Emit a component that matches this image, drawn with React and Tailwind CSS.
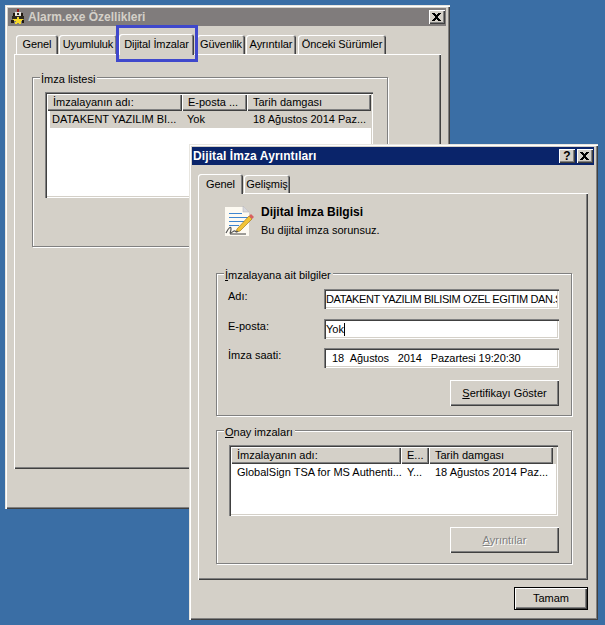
const raised = "shadow-[inset_1px_1px_0_#ffffff,inset_-1px_-1px_0_#404040,inset_-2px_-2px_0_#808080]";
const win = "shadow-[inset_1px_1px_0_#e8e6e0,inset_2px_2px_0_#ffffff,inset_-1px_-1px_0_#404040,inset_-2px_-2px_0_#808080]";
const sunken = "shadow-[inset_1px_1px_0_#808080,inset_2px_2px_0_#404040,inset_-1px_-1px_0_#ffffff,inset_-2px_-2px_0_#d4d0c8]";
const etched = "shadow-[inset_0_0_0_1px_#808080,1px_1px_0_#ffffff,inset_1px_1px_0_1px_#ffffff]";
const tabBevel = "shadow-[inset_1px_1px_0_#ffffff,inset_-1px_0_0_#404040,inset_-2px_0_0_#808080]";

function Tab({ label, w, active, h }) {
  return (
    <div
      className={`flex items-center justify-center rounded-t-[3px] bg-[#d4d0c8] tracking-[-0.1px] ${tabBevel} ${active ? "relative z-10 mb-[-1px]" : ""}`}
      style={{ width: w, height: h }}
    >
      {label}
    </div>
  );
}

function Group({ label, h, children }) {
  return (
    <div className={`relative w-[356px] ${etched}`} style={{ height: h }}>
      <div className="absolute left-[8px] top-[-5px] bg-[#d4d0c8] pl-[1px] pr-[2px] leading-[14px]">{label}</div>
      {children}
    </div>
  );
}

function Header({ cols }) {
  return (
    <div className="flex h-[17px] bg-[#d4d0c8]">
      {cols.map((c) => (
        <div key={c.t} className={`flex items-center pl-[6px] overflow-hidden whitespace-nowrap ${raised}`} style={{ width: c.w }}>{c.t}</div>
      ))}
    </div>
  );
}

function Button({ children, className = "" }) {
  return <div className={`flex items-center justify-center bg-[#d4d0c8] ${raised} ${className}`}>{children}</div>;
}

function Field({ label, value, mt, caret, valueClass = "" }) {
  return (
    <div className="flex" style={{ marginTop: mt }}>
      <div className="w-[96px] ml-[12px] leading-[14px]">{label}</div>
      <div className={`w-[235px] h-[20px] bg-white ${sunken} flex items-center overflow-hidden whitespace-nowrap pl-[2px] pr-[2px]`}>
        <span className={`overflow-hidden ${valueClass}`}>{value}</span>
        {caret && <span className="w-[1px] h-[13px] bg-black" />}
      </div>
    </div>
  );
}

function AlarmIcon() {
  return (
    <svg width="16" height="18" viewBox="0 0 16 18" shapeRendering="crispEdges">
      <rect x="7" y="1" width="2" height="4" fill="#a01818" />
      <rect x="3" y="5" width="3" height="3" fill="#201810" />
      <rect x="10" y="5" width="3" height="3" fill="#201810" />
      <rect x="5" y="4" width="6" height="5" fill="#e8e4dc" />
      <rect x="2" y="8" width="12" height="3" fill="#2c2820" />
      <rect x="7" y="5" width="2" height="2" fill="#302820" />
      <polygon points="8,8 9.5,11 13,11.5 10.5,13.5 11.5,17 8,15 4.5,17 5.5,13.5 3,11.5 6.5,11" fill="#f4d82c" />
      <rect x="1" y="12" width="3" height="3" fill="#201810" />
      <rect x="12" y="12" width="2" height="3" fill="#201810" />
    </svg>
  );
}

function DocIcon() {
  return (
    <svg width="30" height="32" viewBox="0 0 30 32">
      <path d="M1 2h19l5 5v24H1z" fill="#fdfaf2" />
      <path d="M19 1l6 6h-6z" fill="#d8d8dc" stroke="#b8b8c0" strokeWidth="0.6" />
      <g stroke="#3f86d0" strokeWidth="1">
        <path d="M5 8.5h13" />
        <path d="M5 12.5h19" />
        <path d="M5 16.5h17" />
        <path d="M5 20.5h10" />
      </g>
      <path d="M13 24L25 11l3 3-12 12-4 1z" fill="#f2c436" stroke="#a87c18" strokeWidth="0.7" />
      <path d="M25 11l2-2 3 3-2 2z" fill="#d86060" />
      <path d="M2 28c3-6 5-7 5-4s-2 5 0 4 3-3 4-2 2 1 3 0" fill="none" stroke="#555555" strokeWidth="1.2" />
      <path d="M6 29h16" stroke="#404040" strokeWidth="1" />
    </svg>
  );
}

function TitleBtn({ children, className = "" }) {
  return (
    <div className={`w-[16px] h-[14px] bg-[#d4d0c8] flex items-center justify-center font-bold text-[12px] text-black ${raised} ${className}`}>{children}</div>
  );
}

function CloseX() {
  return (
    <svg width="9" height="8" viewBox="0 0 9 8" strokeWidth="2" stroke="#000" shapeRendering="crispEdges" className="mr-[1px]">
      <path d="M1 0l7 8M8 0l-7 8" fill="none" />
    </svg>
  );
}

export default function App() {
  return (
    <div className="relative w-[605px] h-[625px] overflow-hidden bg-[#3a6ea5] text-[11px] text-black font-['Liberation_Sans',Arial,sans-serif]">
      {/* back window */}
      <div className={`absolute left-[5px] top-[5px] w-[445px] h-[504px] bg-[#d4d0c8] pt-[3px] pl-[3px] pr-[4px] ${win}`}>
        <div className="flex h-[18px] items-center bg-[#807c7c] pl-[2px] pr-[1px] text-[12px] font-bold text-[#d4d0c8]">
          <AlarmIcon />
          <span className="ml-[2px] grow">Alarm.exe Özellikleri</span>
          <TitleBtn><CloseX /></TitleBtn>
        </div>
        <div className="flex h-[28px] items-end ml-[8px]">
          <Tab label="Genel" w={42} h={19} />
          <div className="w-[1px]" />
          <Tab label="Uyumluluk" w={58} h={19} />
          <div className="w-[2px]" />
          <Tab label="Dijital İmzalar" w={75} h={21} active />
          <div className="w-[3px]" />
          <Tab label="Güvenlik" w={48} h={19} />
          <div className="w-[1px]" />
          <Tab label="Ayrıntılar" w={50} h={19} />
          <div className="w-[2px]" />
          <Tab label="Önceki Sürümler" w={88} h={19} />
        </div>
        <div className={`ml-[6px] w-[427px] h-[415px] bg-[#d4d0c8] pt-[23px] pl-[18px] ${raised}`}>
          <Group label="İmza listesi" h={170}>
            <div className="pt-[15px] pl-[13px]">
              <div className={`w-[328px] h-[106px] bg-white p-[2px] ${sunken}`}>
                <Header cols={[{ t: "İmzalayanın adı:", w: 135 }, { t: "E-posta ...", w: 65 }, { t: "Tarih damgası", w: 124 }]} />
                <div className="flex h-[17px] ml-[3px] items-center bg-[#d4d0c8] whitespace-nowrap">
                  <div className="w-[135px] pl-[2px]">DATAKENT YAZILIM BI...</div>
                  <div className="w-[65px] pl-[2px]">Yok</div>
                  <div className="pl-[3px]">18 Ağustos 2014 Paz...</div>
                </div>
              </div>
            </div>
          </Group>
        </div>
      </div>

      {/* highlight on the tab */}
      <div className="absolute left-[116px] top-[25px] w-[82px] h-[37px] z-10 border-[3px] border-[#3f48cc]" />

      {/* front window */}
      <div className={`absolute z-20 left-[189px] top-[144px] w-[409px] h-[476px] bg-[#d4d0c8] pt-[3px] pl-[3px] pr-[4px] ${win}`}>
        <div className="flex h-[18px] items-center bg-[#0a246a] pl-[1px] pr-[1px] text-[12px] font-bold text-white">
          <span className="grow tracking-[0.1px]">Dijital İmza Ayrıntıları</span>
          <TitleBtn className="mr-[2px]">?</TitleBtn>
          <TitleBtn><CloseX /></TitleBtn>
        </div>
        <div className="flex h-[28px] items-end ml-[6px]">
          <Tab label="Genel" w={45} h={20} active />
          <div className="w-[1px]" />
          <Tab label="Gelişmiş" w={46} h={18} />
        </div>
        <div className={`ml-[6px] w-[390px] h-[387px] bg-[#d4d0c8] pl-[18px] pt-[12px] ${raised}`}>
          <div className="flex h-[68px] ml-[8px]">
            <DocIcon />
            <div className="ml-[7px]">
              <div className="text-[12px] font-bold leading-[14px]">Dijital İmza Bilgisi</div>
              <div className="mt-[4px] leading-[14px]">Bu dijital imza sorunsuz.</div>
            </div>
          </div>
          <Group label={<><span className="underline">İ</span>mzalayana ait bilgiler</>} h={143}>
            <div className="pt-[16px]">
              <Field label="Adı:" value="DATAKENT YAZILIM BILISIM OZEL EGITIM DAN.SAN" mt={0} valueClass="tracking-[-0.4px]" />
              <Field label="E-posta:" value="Yok" mt={10} caret />
              <Field label="İmza saati:" value={"\u00a0\u00a018\u00a0\u00a0Ağustos\u00a0\u00a0 2014\u00a0\u00a0 Pazartesi 19:20:30"} mt={9} valueClass="tracking-[-0.1px]" />
              <div className="flex justify-end pr-[13px] mt-[12px]">
                <Button className="w-[109px] h-[26px]"><span><span className="underline">S</span>ertifikayı Göster</span></Button>
              </div>
            </div>
          </Group>
          <div className="h-[14px]" />
          <Group label={<><span className="underline">O</span>nay imzaları</>} h={134}>
            <div className="pt-[15px] pl-[13px]">
              <div className={`w-[329px] h-[71px] bg-white p-[2px] ${sunken}`}>
                <Header cols={[{ t: "İmzalayanın adı:", w: 170 }, { t: "E...", w: 28 }, { t: "Tarih damgası", w: 124 }]} />
                <div className="flex h-[17px] items-center whitespace-nowrap">
                  <div className="w-[170px] pl-[6px]">GlobalSign TSA for MS Authenti...</div>
                  <div className="w-[28px] pl-[6px]">Y...</div>
                  <div className="pl-[6px]">18 Ağustos 2014 Paz...</div>
                </div>
              </div>
              <div className="flex justify-end pr-[13px] mt-[11px]">
                <Button className="w-[109px] h-[26px] text-[#808080] [text-shadow:1px_1px_0_#ffffff]"><span><span className="underline">A</span>yrıntılar</span></Button>
              </div>
            </div>
          </Group>
        </div>
        <div className="flex justify-end mr-[6px] mt-[7px]">
          <Button className="w-[74px] h-[23px] outline outline-1 outline-black -outline-offset-1 shadow-[inset_2px_2px_0_#ffffff,inset_-2px_-2px_0_#404040,inset_-3px_-3px_0_#808080]">Tamam</Button>
        </div>
      </div>
    </div>
  );
}
